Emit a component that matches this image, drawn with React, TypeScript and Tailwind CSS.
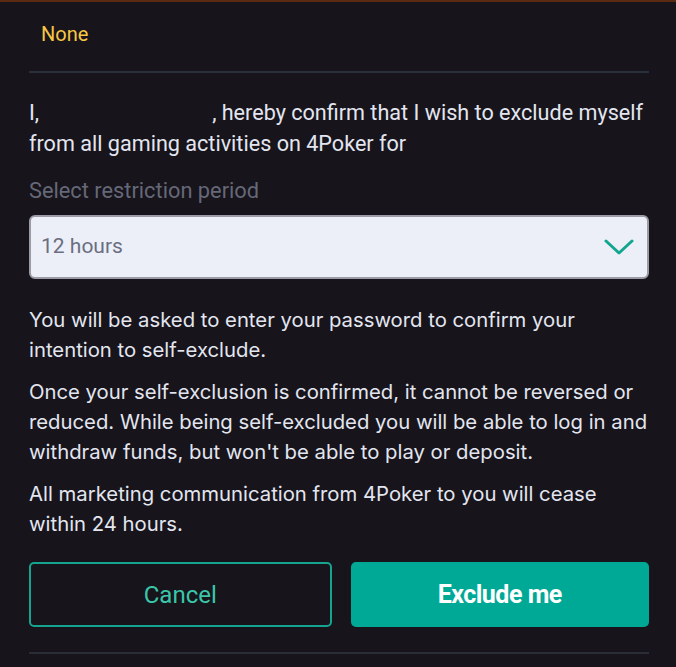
import React from "react";

export default function App() {
  return (
    <div className="w-[676px] h-[667px] bg-[#17141b] overflow-hidden border-t-2 border-[#5a2a12]">
      <div className="pl-[29px] pr-[27px]">
        <div className="h-[71px] flex items-center pl-3 border-b-2 border-[#2a303b]" style={{ fontFamily: "Roboto, sans-serif" }}>
          <span className="text-[20px] text-[#f7c744] -mt-[6px]">None</span>
        </div>
        <p className="mt-[24px] -mr-[4px] text-[21.6px] leading-[31px] text-[#e3e6f0]" style={{ fontFamily: "Roboto, sans-serif" }}>
          I,<span className="inline-block w-[173px]"></span>, hereby confirm that I wish to exclude myself from all gaming activities on 4Poker for
        </p>
        <div className="mt-[18px] text-[21.8px] leading-[28px] text-[#656878]" style={{ fontFamily: "Roboto, sans-serif" }}>
          Select restriction period
        </div>
        <div className="mt-[10px] h-[64px] rounded-[6px] bg-[#eceff8] border-2 border-[#9b9aa6] flex items-center justify-between pl-[10px] pr-[13px]" style={{ fontFamily: "Roboto, sans-serif" }}>
          <span className="text-[21px] text-[#6a6e80]">12 hours</span>
          <svg width="30" height="18" viewBox="0 0 30 18" fill="none">
            <path d="M2 3 L15 15 L28 3" stroke="#12a58f" strokeWidth="3" strokeLinecap="round" strokeLinejoin="round" />
          </svg>
        </div>
        <div className="mt-[26px] -mr-[6px] text-[20.3px] leading-[30px] text-[#e3e6f0] flex flex-col gap-[12px]" style={{ fontFamily: "Inter, sans-serif" }}>
          <p>You will be asked to enter your password to confirm your intention to self-exclude.</p>
          <p>Once your self-exclusion is confirmed, it cannot be reversed or reduced. While being self-excluded you will be able to log in and withdraw funds, but won't be able to play or deposit.</p>
          <p>All marketing communication from 4Poker to you will cease within 24 hours.</p>
        </div>
        <div className="mt-[23px] flex gap-[19px] pb-[25px] border-b-2 border-[#2a2d36]" style={{ fontFamily: "Roboto, sans-serif" }}>
          <button className="flex-1 h-[65px] rounded-[5px] border-2 border-[#14a48f] text-[#3ac6a8] text-[24px]">Cancel</button>
          <button className="flex-1 h-[65px] rounded-[5px] bg-[#00a896] text-white text-[25px] font-bold tracking-[-0.5px]">Exclude me</button>
        </div>
      </div>
    </div>
  );
}
